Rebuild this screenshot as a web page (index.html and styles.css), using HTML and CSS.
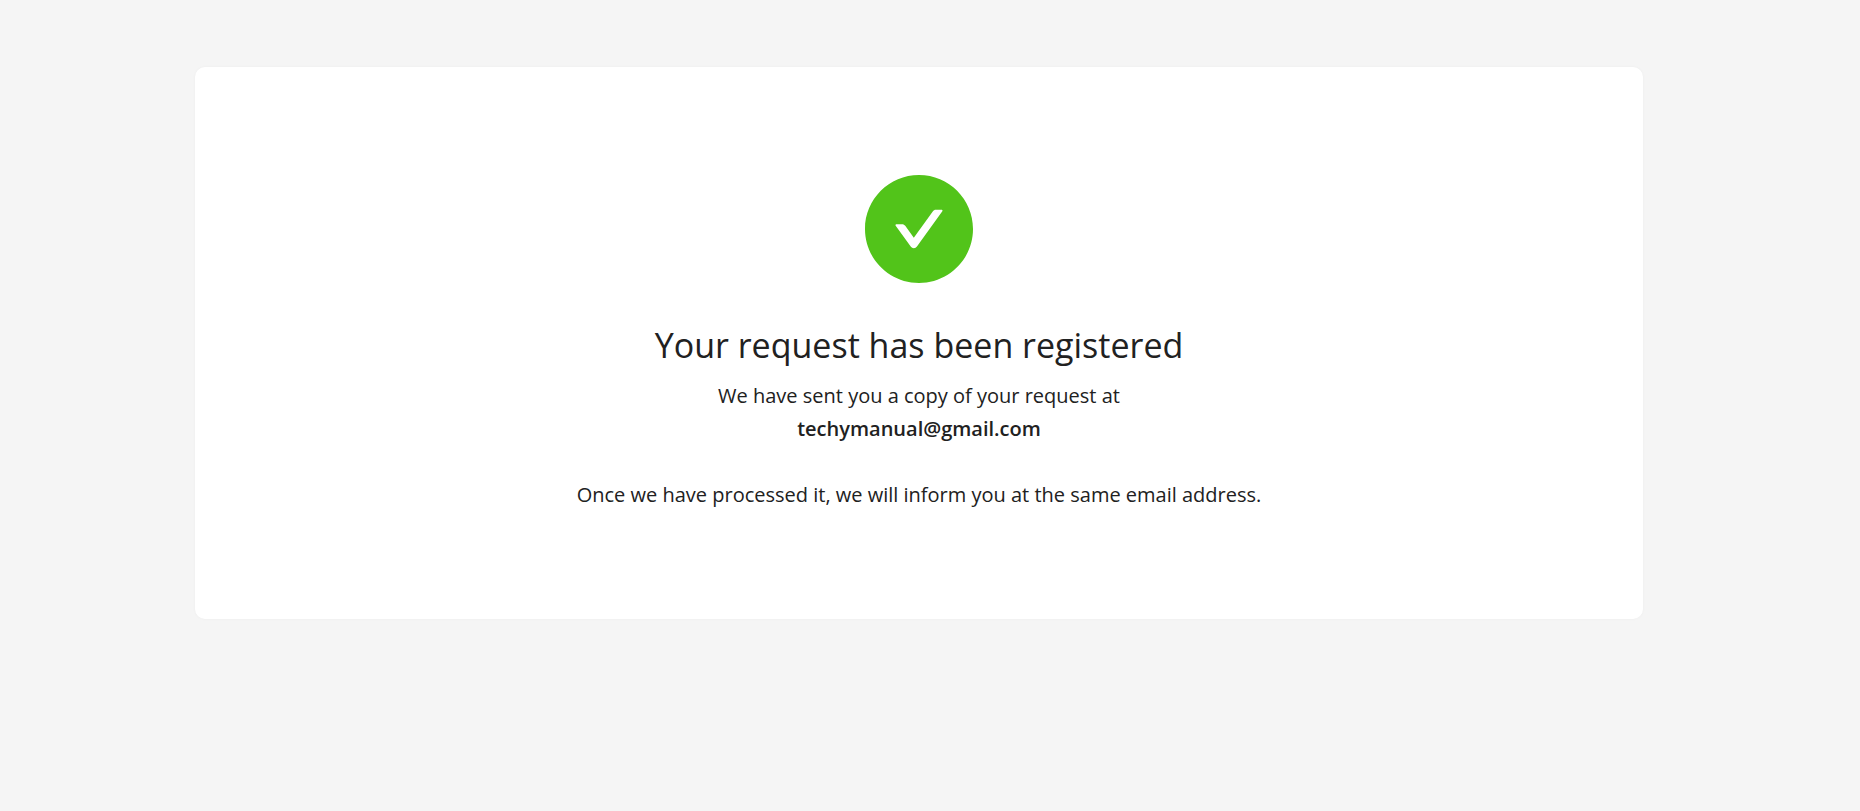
FILE: index.html
```html
<!DOCTYPE html>
<html lang="en">
<head>
    <meta charset="UTF-8">
    <meta name="viewport" content="width=device-width, initial-scale=1.0">
    <title>Request registered</title>
    <link rel="stylesheet" href="styles.css">
</head>
<body>

    <!-- Confirmation card -->
    <main class="result-card">
        <svg class="result-icon" viewBox="64 64 896 896" aria-hidden="true">
            <path d="M512 64C264.6 64 64 264.6 64 512s200.6 448 448 448 448-200.6 448-448S759.4 64 512 64zm193.5 301.7l-210.6 292a31.8 31.8 0 01-51.7 0L318.5 484.9c-3.8-5.3 0-12.7 6.5-12.7h46.9c10.2 0 19.9 4.9 25.9 13.3l71.2 98.8 157.2-218c6-8.3 15.6-13.3 25.9-13.3H699c6.5 0 10.3 7.4 6.5 12.7z"/>
        </svg>
        <h1 class="result-title">Your request has been registered</h1>
        <p class="result-text">We have sent you a copy of your request at<br><strong>techymanual@gmail.com</strong></p>
        <p class="result-text result-note">Once we have processed it, we will inform you at the same email address.</p>
    </main>

</body>
</html>
```

FILE: styles.css
```css
/* General Page Styles */
body {
    margin: 0;
    padding: 67px 22px 67px 0;
    background-color: #f5f5f5;
    color: #212121;
    font-family: "Segoe UI", "Open Sans", "Noto Sans", sans-serif;
}

/* Confirmation card */
.result-card {
    box-sizing: border-box;
    max-width: 1448px;
    margin: 0 auto;
    padding: 108px 36px;
    background-color: white;
    border-radius: 10px;
    box-shadow: 0 0 3px rgba(0, 0, 0, 0.04);
    text-align: center;
}

.result-icon {
    display: block;
    width: 108px;
    height: 108px;
    margin: 0 auto 36px;
    fill: #52c41a;
}

.result-title {
    margin: 0 0 8px;
    font-size: 34px;
    font-weight: 400;
    line-height: 52px;
}

.result-text {
    margin: 0;
    font-size: 20px;
    line-height: 33px;
}

.result-text strong {
    font-weight: 600;
}

.result-note {
    margin-top: 33px;
}
```
